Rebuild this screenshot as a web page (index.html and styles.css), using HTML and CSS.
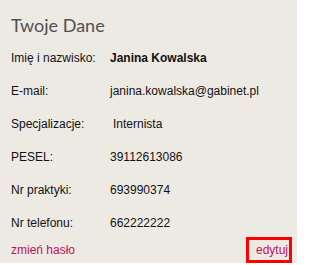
FILE: index.html
```html
<!DOCTYPE html>
<html lang="pl">
<head>
<meta charset="utf-8">
<link rel="stylesheet" href="styles.css">
</head>
<body>
<div class="card">
  <h2 class="title">Twoje Dane</h2>
  <div class="rows">
    <div class="row"><span class="label">Imię i nazwisko:</span><span class="value bold">Janina Kowalska</span></div>
    <div class="row"><span class="label">E-mail:</span><span class="value">janina.kowalska@gabinet.pl</span></div>
    <div class="row"><span class="label">Specjalizacje:</span><span class="value shift">Internista</span></div>
    <div class="row"><span class="label">PESEL:</span><span class="value">39112613086</span></div>
    <div class="row"><span class="label">Nr praktyki:</span><span class="value">693990374</span></div>
    <div class="row"><span class="label">Nr telefonu:</span><span class="value">662222222</span></div>
  </div>
  <div class="footer">
    <a class="link" href="#">zmień hasło</a>
    <a class="link edit" href="#">edytuj</a>
  </div>
</div>
</body>
</html>
```
FILE: styles.css
```css
html, body {
  margin: 0;
  padding: 0;
  background: #ffffff;
}
body {
  width: 300px;
  height: 265px;
  overflow: hidden;
}
.card {
  box-sizing: border-box;
  width: 297px;
  height: 263px;
  background: #edeae4;
  padding: 13px 0 0 11px;
  font-family: "Liberation Sans", Arial, sans-serif;
  font-size: 12px;
  color: #111111;
}
.title {
  margin: 0;
  font-family: Lato, "Noto Sans", sans-serif;
  font-weight: normal;
  font-size: 18px;
  line-height: 24px;
  color: #505050;
}
.rows {
  display: flex;
  flex-direction: column;
  margin-top: 13px;
}
.row {
  display: flex;
  height: 33px;
  line-height: 16px;
}
.label {
  width: 99px;
}
.value.bold {
  font-weight: bold;
}
.value.shift {
  padding-left: 3px;
}
.footer {
  display: flex;
  justify-content: space-between;
  align-items: center;
  margin-top: -11px;
  padding-right: 5px;
}
.link {
  color: #c0105a;
  text-decoration: none;
}
.edit {
  border: 3px solid #ff0000;
  padding: 3px 1px 3px 7px;
}
```
